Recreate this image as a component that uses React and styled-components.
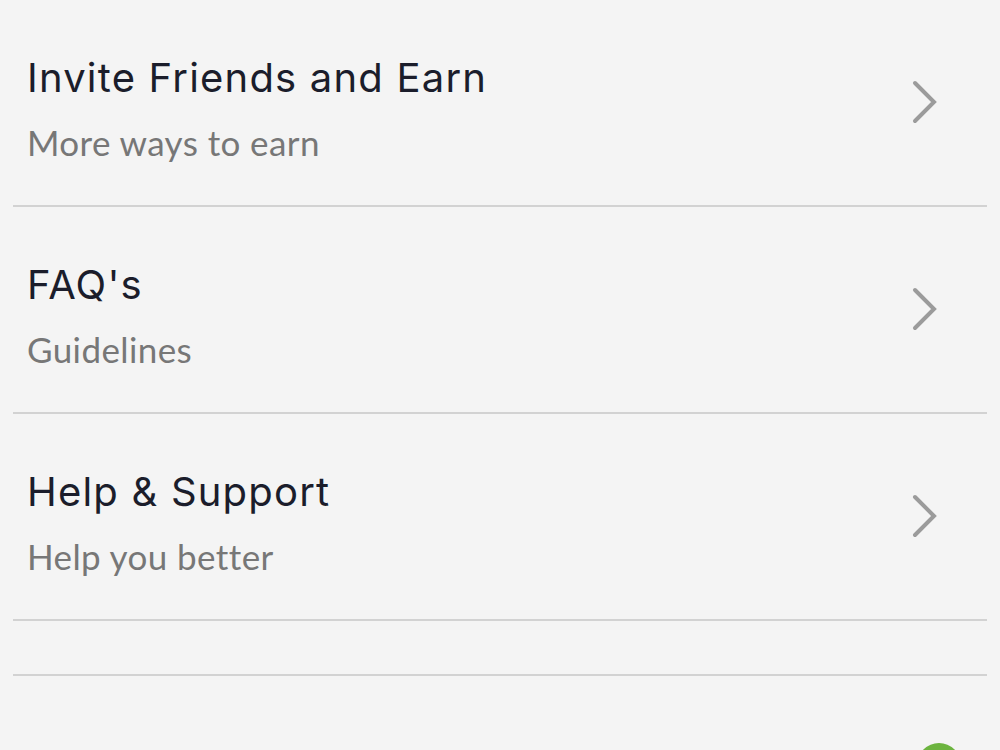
import React from "react";
import styled, { createGlobalStyle } from "styled-components";

const Global = createGlobalStyle`
  html, body { margin: 0; padding: 0; background: #f4f4f4; }
  body { font-family: Lato, "Noto Sans", sans-serif; }
`;

const Page = styled.div`
  width: 1000px;
  height: 750px;
  overflow: hidden;
  position: relative;
  background: #f4f4f4;
`;

const List = styled.div`
  display: flex;
  flex-direction: column;
`;

const Row = styled.div`
  display: flex;
  align-items: center;
  justify-content: space-between;
  padding: 55px 62px 43px 27px;
`;

const Divider = styled.div`
  height: 2px;
  margin: 0 13px;
  background: #d2d2d2;
`;

const TextCol = styled.div`
  display: flex;
  flex-direction: column;
  gap: 21px;
`;

const Title = styled.div`
  font-family: Inter, Lato, sans-serif;
  font-size: 40px;
  line-height: 46px;
  letter-spacing: 1.2px;
  color: #1b1d2b;
  font-weight: 400;
`;

const Sub = styled.div`
  font-family: Lato, sans-serif;
  font-size: 35px;
  line-height: 40px;
  letter-spacing: 0.4px;
  color: #777777;
`;

const Spacer = styled.div`
  height: 53px;
`;

const Chevron = styled.svg`
  width: 26px;
  height: 44px;
  margin-top: ${(p) => p.$shift || 0}px;
  flex: none;
`;

const Fab = styled.div`
  position: absolute;
  left: 917px;
  top: 743px;
  width: 44px;
  height: 44px;
  border-radius: 50%;
  background: #6cb43f;
`;

const items = [
  { t: "Invite Friends and Earn", s: "More ways to earn" },
  { t: "FAQ's", s: "Guidelines" },
  { t: "Help & Support", s: "Help you better" },
];

export default function App() {
  return (
    <Page>
      <Global />
      <List>
        {items.map((it) => (
          <React.Fragment key={it.t}>
            <Row>
              <TextCol>
                <Title>{it.t}</Title>
                <Sub>{it.s}</Sub>
              </TextCol>
              <Chevron viewBox="0 0 26 44" $shift={-14}>
                <polyline
                  points="3,3 22,22 3,41"
                  fill="none"
                  stroke="#9b9b9b"
                  strokeWidth="4"
                  strokeLinecap="round"
                  strokeLinejoin="miter"
                />
              </Chevron>
            </Row>
            <Divider />
          </React.Fragment>
        ))}
        <Spacer />
        <Divider />
      </List>
      <Fab />
    </Page>
  );
}
